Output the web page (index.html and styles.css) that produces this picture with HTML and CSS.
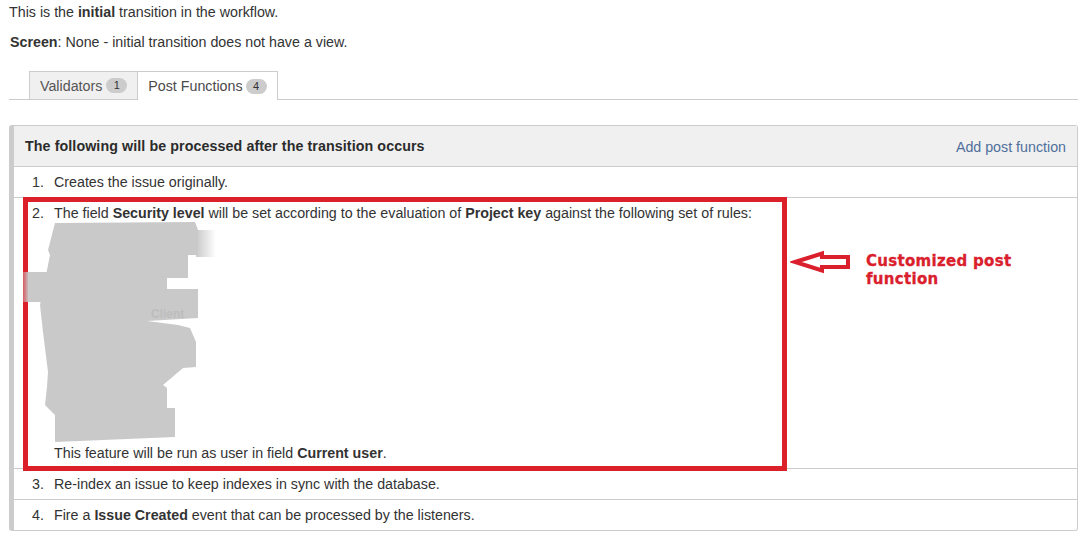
FILE: index.html
```html
<!DOCTYPE html>
<html lang="en">
<head>
<meta charset="utf-8">
<title>Transition</title>
<link rel="stylesheet" href="styles.css">
</head>
<body>
<p class="intro">This is the <b>initial</b> transition in the workflow.</p>
<p class="screen"><b>Screen</b>: None - initial transition does not have a view.</p>
<nav class="tabs">
  <a class="tab">Validators <span class="badge">1</span></a>
  <a class="tab active">Post Functions <span class="badge">4</span></a>
</nav>
<section class="panel">
  <header class="panel-head">
    <h2>The following will be processed after the transition occurs</h2>
    <a class="add">Add post function</a>
  </header>
  <ol class="steps">
    <li>Creates the issue originally.</li>
    <li class="tall">The field <b>Security level</b> will be set according to the evaluation of <b>Project key</b> against the following set of rules:
      <svg class="blur" viewBox="54 223 165 220" width="165" height="220" aria-hidden="true">
        <defs>
          <linearGradient id="fr"><stop offset="0" stop-color="#c9c9c9"/><stop offset="1" stop-color="#c9c9c9" stop-opacity="0"/></linearGradient>
          <linearGradient id="fl"><stop offset="0" stop-color="#c9c9c9" stop-opacity=".35"/><stop offset="1" stop-color="#c9c9c9"/></linearGradient>
        </defs>
        <rect x="196" y="230" width="20" height="27" fill="url(#fr)"/>
        <rect x="23" y="272" width="6" height="30" fill="url(#fl)"/>
        <rect x="29" y="272" width="24" height="30" fill="#c9c9c9"/>
        <polygon fill="#c9c9c9" points="55,223 195,222 198,230 198,255 188,255 188,278 167,278 167,289 198,289 198,318 147,321 178,325 190,328 196,342 196,367 183,368 163,385 167,388 167,408 175,408 175,437 55,442 55,415 45,405 47,387 48,372 45,348 43,332 40,305 50,255 48,250"/>
        <text x="151" y="318" class="ghost">Client</text>
      </svg>
      <div>This feature will be run as user in field <b>Current user</b>.</div>
    </li>
    <li>Re-index an issue to keep indexes in sync with the database.</li>
    <li>Fire a <b>Issue Created</b> event that can be processed by the listeners.</li>
  </ol>
  <div class="highlight"></div>
  <svg class="arrow" viewBox="0 0 62 24" width="62" height="24" aria-hidden="true">
    <polygon points="5,12 32,3.500 32,7 58,7 58,17 32,17 32,20.500" fill="#fff" stroke="#d9202c" stroke-width="4"/>
  </svg>
  <p class="note">Customized post function</p>
</section>
</body>
</html>
```
FILE: styles.css
```css
* { box-sizing: border-box; }
html, body { margin: 0; background: #fff; overflow: hidden; }
body {
  width: 1091px;
  height: 541px;
  padding: 2px 13px 0 9px;
  font: 14.25px/20px "Liberation Sans", Arial, sans-serif;
  color: #333;
}
p { margin: 0; }
.intro { height: 20px; }
.screen { margin: 10px 0 0 1px; height: 20px; }
.tabs {
  display: flex;
  margin-top: 19px;
  padding-left: 20px;
  height: 29px;
  border-bottom: 1px solid #ccc;
}
.tab {
  display: flex;
  align-items: center;
  gap: 4px;
  height: 28px;
  padding: 0 10px;
  border: 1px solid #ccc;
  border-bottom: 0;
  background: #f0f0f0;
  color: #555;
}
.tab + .tab { border-left: 0; }
.tab.active {
  height: 29px;
  gap: 3px;
  background: #fff;
  color: #4a4a4a;
}
.badge {
  width: 21px;
  height: 15px;
  border-radius: 8px;
  background: #ccc;
  color: #333;
  font-size: 11px;
  line-height: 15px;
  text-align: center;
}
.panel {
  position: relative;
  margin-top: 25px;
  height: 406px;
  border: 1px solid #ccc;
  border-left: 5px solid #ccc;
  border-radius: 3px;
}
.panel-head {
  display: flex;
  justify-content: space-between;
  align-items: center;
  height: 41px;
  padding: 0 11px;
  background: #f0f0f0;
  border-bottom: 1px solid #ccc;
}
.panel-head h2 { margin: 0; font-size: 14.25px; font-weight: 700; color: #2b2b2b; letter-spacing: .09px; }
.add { color: #4f6f9b; padding-top: 2px; }
.steps { margin: 0; padding: 0; list-style: none; counter-reset: step; }
.steps li {
  position: relative;
  height: 31px;
  padding: 5px 0 0 40px;
  border-bottom: 1px solid #ccc;
  counter-increment: step;
}
.steps li::before { content: counter(step) "."; position: absolute; left: 18px; }
.steps li:last-child { border-bottom: 0; height: 30px; }
.steps li.tall { height: 271px; }
.blur { display: block; position: relative; z-index: 1; overflow: visible; }
.ghost { font: 700 12px "Liberation Sans", Arial, sans-serif; fill: #bdbdbd; }
.highlight {
  position: absolute;
  left: 9px;
  top: 71px;
  width: 764px;
  height: 274px;
  border: 5px solid #dc2029;
  pointer-events: none;
}
.arrow { position: absolute; left: 776px; top: 124px; }
.note {
  position: absolute;
  left: 852px;
  top: 126px;
  width: 170px;
  font: 700 15px/18px "DejaVu Sans", sans-serif;
  letter-spacing: .3px;
  -webkit-text-stroke: .3px #d9202c;
  color: #d9202c;
}
```
